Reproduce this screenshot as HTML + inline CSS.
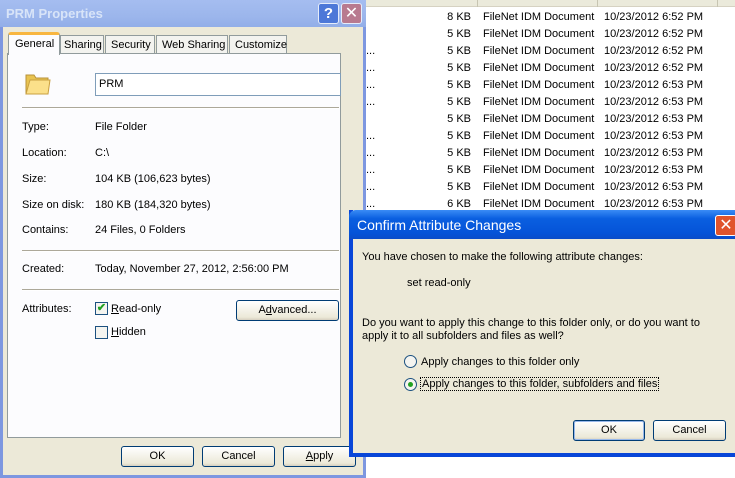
<!DOCTYPE html>
<html><head><style>
*{margin:0;padding:0;box-sizing:border-box}
body{width:735px;height:478px;overflow:hidden;position:relative;background:#fff;font-family:"Liberation Sans",sans-serif;font-size:11px;color:#000}
.a{position:absolute;white-space:nowrap}
.btn{position:absolute;border:1px solid #003c74;border-radius:3px;background:linear-gradient(#fff,#ece9d8 85%,#d6d0c0);text-align:center;font-size:11px}
.sep{position:absolute;height:2px;border-top:1px solid #aca899;border-bottom:1px solid #fff}
</style></head><body>
<div class="a" style="left:366px;top:0;width:369px;height:7px;background:#ebeadb;border-bottom:1px solid #d6d2c2"></div>
<div class="a" style="left:477px;top:0;width:1px;height:7px;background:#c7c5b2"></div>
<div class="a" style="left:597px;top:0;width:1px;height:7px;background:#c7c5b2"></div>
<div class="a" style="left:717px;top:0;width:1px;height:7px;background:#c7c5b2"></div>
<div id="rows"></div>
<script>
var s=['8','5','5','5','5','5','5','5','5','5','5','6'];var h='';
for(var i=0;i<12;i++){var y=11+i*17;var t=i<4?'6:52':'6:53';
h+='<div class="a" style="left:366px;top:'+y+'px;color:#000">'+(i>1&&i!=6?'...':'')+'</div><div class="a" style="left:430px;width:41px;text-align:right;top:'+y+'px">'+s[i]+' KB</div><div class="a" style="left:483px;top:'+y+'px">FileNet IDM Document</div><div class="a" style="left:604px;top:'+y+'px">10/23/2012 '+t+' PM</div>';}
document.getElementById('rows').innerHTML=h;
</script>
<div class="a" style="left:0;top:0;width:366px;height:478px;background:#ece9d8;border:3px solid #7d97e0;border-top:none"></div>
<div class="a" style="left:0;top:0;width:366px;height:27px;background:linear-gradient(#a5bdf0,#9cb6ec 60%,#92aee8);"></div>
<div class="a" style="left:6px;top:6px;font-size:13px;font-weight:bold;color:#d8e4f8">PRM Properties</div>
<div class="a" style="left:318px;top:3px;width:21px;height:21px;background:#4d78d8;border:1px solid #e5ecfa;border-radius:3px;color:#fff;font-weight:bold;font-size:15px;text-align:center;line-height:19px">?</div>
<div class="a" style="left:341px;top:3px;width:21px;height:21px;background:#b87a8f;border:1px solid #e5ecfa;border-radius:3px;color:#fff;font-size:16px;text-align:center;line-height:19px">✕</div>
<div class="a" style="left:7px;top:53px;width:334px;height:385px;background:#fcfcfe;border:1px solid #919b9c"></div>
<div class="a" style="left:8px;top:32px;width:52px;height:23px;background:#fcfcfe;border:1px solid #919b9c;border-top:3px solid #f8b640;border-bottom:none;border-radius:3px 3px 0 0;padding:3px 0 0 6px">General</div>
<div class="a" style="left:60px;top:35px;width:44px;height:18px;background:#f3f3ef;border:1px solid #919b9c;border-bottom:none;padding:3px 0 0 3px">Sharing</div>
<div class="a" style="left:105px;top:35px;width:50px;height:18px;background:#f3f3ef;border:1px solid #919b9c;border-bottom:none;padding:3px 0 0 5px">Security</div>
<div class="a" style="left:156px;top:35px;width:72px;height:18px;background:#f3f3ef;border:1px solid #919b9c;border-bottom:none;padding:3px 0 0 5px">Web Sharing</div>
<div class="a" style="left:229px;top:35px;width:58px;height:18px;background:#f3f3ef;border:1px solid #919b9c;border-bottom:none;padding:3px 0 0 5px">Customize</div>
<svg class="a" style="left:24px;top:69px" width="28" height="28"><path d="M2 6h8l2 3h12v16H2z" fill="#e8c350" stroke="#b8923a"/><path d="M6 11h20l-2 14H2z" fill="#fbe08a" stroke="#c9a040"/></svg>
<div class="a" style="left:95px;top:73px;width:246px;height:23px;background:#fff;border:1px solid #7f9db9;padding:4px 0 0 3px">PRM</div>
<div class="sep" style="left:22px;top:107px;width:317px"></div>
<div class="a" style="left:22px;top:121px">Type:</div><div class="a" style="left:95px;top:121px">File Folder</div>
<div class="a" style="left:22px;top:147px">Location:</div><div class="a" style="left:95px;top:147px">C:\</div>
<div class="a" style="left:22px;top:173px">Size:</div><div class="a" style="left:95px;top:173px">104 KB (106,623 bytes)</div>
<div class="a" style="left:22px;top:199px">Size on disk:</div><div class="a" style="left:95px;top:199px">180 KB (184,320 bytes)</div>
<div class="a" style="left:22px;top:224px">Contains:</div><div class="a" style="left:95px;top:224px">24 Files, 0 Folders</div>
<div class="sep" style="left:22px;top:250px;width:317px"></div>
<div class="a" style="left:22px;top:263px">Created:</div><div class="a" style="left:95px;top:263px">Today, November 27, 2012, 2:56:00 PM</div>
<div class="sep" style="left:22px;top:289px;width:317px"></div>
<div class="a" style="left:22px;top:303px">Attributes:</div>
<div class="a" style="left:95px;top:302px;width:13px;height:13px;border:1px solid #1c5180;background:#f4f4f0;color:#21a121;font-size:11px;line-height:11px;text-align:center;font-weight:bold">✔</div>
<div class="a" style="left:111px;top:303px"><u>R</u>ead-only</div>
<div class="a" style="left:95px;top:326px;width:13px;height:13px;border:1px solid #1c5180;background:#f4f4f0"></div>
<div class="a" style="left:111px;top:326px"><u>H</u>idden</div>
<div class="btn" style="left:236px;top:300px;width:103px;height:21px;line-height:19px">A<u>d</u>vanced...</div>
<div class="btn" style="left:121px;top:446px;width:73px;height:21px;line-height:19px">OK</div>
<div class="btn" style="left:202px;top:446px;width:73px;height:21px;line-height:19px">Cancel</div>
<div class="btn" style="left:283px;top:446px;width:73px;height:21px;line-height:19px"><u>A</u>pply</div>
<div class="a" style="left:349px;top:210px;width:390px;height:247px;background:#ece9d8;border:4px solid #0846d8;border-top:none"></div>
<div class="a" style="left:349px;top:210px;width:390px;height:29px;background:linear-gradient(#3a8cf5,#0a5fe0 30%,#0553d8 80%,#0a4cc8);border-radius:7px 0 0 0"></div>
<div class="a" style="left:357px;top:217px;font-size:14px;color:#fff">Confirm Attribute Changes</div>
<div class="a" style="left:715px;top:215px;width:22px;height:21px;background:#e0542c;border:1px solid #fff;border-radius:3px;color:#fff;font-size:16px;text-align:center;line-height:19px">✕</div>
<div class="a" style="left:362px;top:251px">You have chosen to make the following attribute changes:</div>
<div class="a" style="left:407px;top:277px">set read-only</div>
<div class="a" style="left:362px;top:317px">Do you want to apply this change to this folder only, or do you want to</div>
<div class="a" style="left:362px;top:330px">apply it to all subfolders and files as well?</div>
<div class="a" style="left:404px;top:355px;width:13px;height:13px;border:1px solid #1c5180;border-radius:50%;background:#f4f4f0"></div>
<div class="a" style="left:421px;top:356px">Apply changes to this folder only</div>
<div class="a" style="left:404px;top:378px;width:13px;height:13px;border:1px solid #1c5180;border-radius:50%;background:#f4f4f0"><div style="margin:3px;width:5px;height:5px;border-radius:50%;background:#21a121"></div></div>
<div class="a" style="left:420px;top:377px;border:1px dotted #000;padding:0 1px">Apply changes to this folder, subfolders and files</div>
<div class="btn" style="left:573px;top:420px;width:72px;height:21px;line-height:19px;border-color:#003c74;box-shadow:inset 0 0 0 1px #98b8ea">OK</div>
<div class="btn" style="left:653px;top:420px;width:73px;height:21px;line-height:19px">Cancel</div>
</body></html>
